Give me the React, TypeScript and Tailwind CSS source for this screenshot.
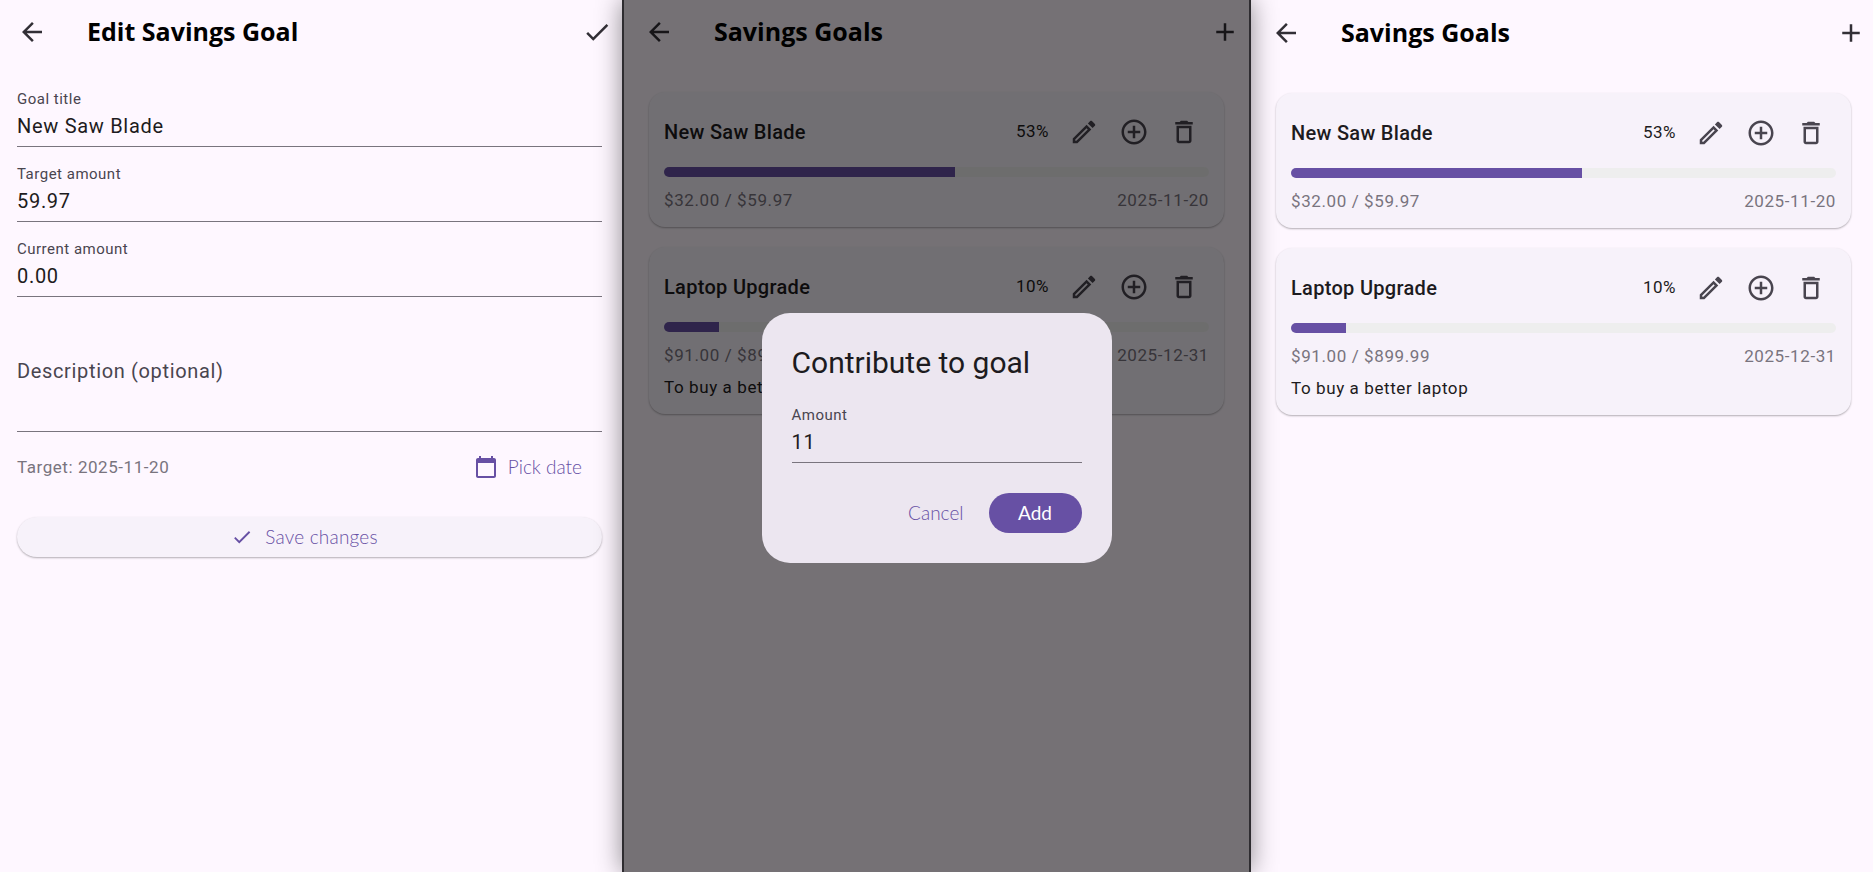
import { ReactNode } from 'react';
import {
  MdAdd,
  MdAddCircleOutline,
  MdArrowBack,
  MdCalendarToday,
  MdCheck,
  MdOutlineDelete,
  MdOutlineEdit,
} from 'react-icons/md';

const ROBOTO = "font-['Roboto',sans-serif] font-[380]";
const BUTTON_FONT = "font-['Lato',sans-serif]";

type Goal = {
  title: string;
  saved: number;
  target: number;
  date: string;
  note?: string;
};

const GOALS: Goal[] = [
  { title: 'New Saw Blade', saved: 32, target: 59.97, date: '2025-11-20' },
  { title: 'Laptop Upgrade', saved: 91, target: 899.99, date: '2025-12-31', note: 'To buy a better laptop' },
];

function AppBar({ title, action, className }: { title: string; action: ReactNode; className: string }) {
  return (
    <div className={`h-16 flex items-center justify-between text-[#322f36] ${className}`}>
      <div className="flex items-center gap-10">
        <MdArrowBack size={30} />
        <h1 className="font-['Open_Sans',sans-serif] font-bold text-[25px] text-black">{title}</h1>
      </div>
      {action}
    </div>
  );
}

function Field({ label, value, className = '' }: { label: string; value: string; className?: string }) {
  return (
    <div className={`border-b border-[#79747e] ${ROBOTO} ${className}`}>
      <div className="text-[15px] tracking-[0.5px] leading-4 text-[#49454f]">{label}</div>
      <div className="text-[20px] tracking-[0.7px] leading-7 mt-[5px] pb-[6px] text-[#1d1b20]">{value}</div>
    </div>
  );
}

function GoalCard({ goal }: { goal: Goal }) {
  const ratio = goal.saved / goal.target;
  return (
    <div className={`bg-[#f7f2fa] rounded-2xl shadow-[0_1px_2px_rgba(0,0,0,0.3)] px-[15px] pb-[15px] ${ROBOTO}`}>
      <div className="h-[64px] pt-[16px] flex items-center">
        <div className="flex-1 text-[20px] tracking-[0.3px] font-[480] text-[#1d1b20]">{goal.title}</div>
        <div className="text-[17px] tracking-[0.4px] text-[#1d1b20] w-[33px] mr-5">{Math.round(ratio * 100)}%</div>
        <div className="flex items-center gap-5 mr-[10px] text-[#49454f]">
          <MdOutlineEdit size={30} />
          <MdAddCircleOutline size={30} />
          <MdOutlineDelete size={30} />
        </div>
      </div>
      <div className="h-[10px] mt-[11px] rounded-full bg-[#eeeeee] overflow-hidden">
        <div className="h-full bg-[#6750a4]" style={{ width: `${ratio * 100}%` }} />
      </div>
      <div className="flex justify-between mt-[11px] text-[17px] tracking-[0.6px] leading-6 text-[#79747e]">
        <span>${goal.saved.toFixed(2)} / ${goal.target.toFixed(2)}</span>
        <span>{goal.date}</span>
      </div>
      {goal.note && <div className="mt-2 text-[17px] tracking-[0.6px] leading-6 text-[#1d1b20]">{goal.note}</div>}
    </div>
  );
}

function GoalList() {
  return (
    <div className="flex flex-col gap-5 mt-[28px]">
      {GOALS.map((goal) => (
        <GoalCard key={goal.title} goal={goal} />
      ))}
    </div>
  );
}

function EditPanel() {
  return (
    <div className="w-[622px] h-full shrink-0 bg-[#fef7ff]">
      <AppBar title="Edit Savings Goal" className="pl-[17px] pr-[10px]" action={<MdCheck size={30} />} />
      <div className="pl-[17px] pr-5 pt-[27px]">
        <div className="flex flex-col gap-[19px]">
          <Field label="Goal title" value="New Saw Blade" />
          <Field label="Target amount" value="59.97" />
          <Field label="Current amount" value="0.00" />
        </div>
        <div className={`mt-[60px] h-[75px] border-b border-[#79747e] text-[20px] tracking-[0.65px] text-[#49454f] leading-7 ${ROBOTO}`}>
          Description (optional)
        </div>
        <div className="flex items-center justify-between mt-[23px] h-6">
          <span className={`pt-px text-[17px] text-[#79747e] tracking-[0.55px] ${ROBOTO}`}>Target: 2025-11-20</span>
          <div className={`flex items-center gap-[10px] mr-5 text-[#6750a4] text-[19px] font-light ${BUTTON_FONT}`}>
            <MdCalendarToday size={24} />
            <span>Pick date</span>
          </div>
        </div>
        <div className={`mt-[38px] h-10 pr-[10px] rounded-full bg-[#f7f2fa] shadow-[0_1px_2px_rgba(0,0,0,0.3)] flex items-center justify-center gap-3 text-[#6750a4] text-[19px] tracking-[0.2px] font-light ${BUTTON_FONT}`}>
          <MdCheck size={22} />
          <span>Save changes</span>
        </div>
      </div>
    </div>
  );
}

function ContributeDialog() {
  return (
    <div className="w-[350px] h-[250px] rounded-[28px] bg-[#ece6f0] px-[30px] pt-[32px]">
      <h2 className={`text-[30px] leading-9 text-[#1d1b20] ${ROBOTO}`}>Contribute to goal</h2>
      <Field label="Amount" value="11" className="mt-[26px]" />
      <div className={`flex items-center justify-end gap-[25px] mt-[30px] text-[19px] ${BUTTON_FONT}`}>
        <span className="text-[#6750a4] font-light">Cancel</span>
        <span className="w-[93px] h-10 rounded-full bg-[#6750a4] text-white flex items-center justify-center">Add</span>
      </div>
    </div>
  );
}

export default function App() {
  return (
    <div className="flex w-[1873px] h-[872px] overflow-hidden bg-[#fef7ff]">
      <EditPanel />

      {/* List behind the contribute dialog */}
      <div className="relative z-10 w-[629px] h-full shrink-0 bg-[#fef7ff] border-x-2 border-[#2e2c30] shadow-[0_0_24px_rgba(0,0,0,0.45)]">
        <AppBar title="Savings Goals" className="pl-5 pr-[9px]" action={<MdAdd size={30} />} />
        <div className="pl-[25px] pr-[25px]">
          <GoalList />
        </div>
        <div className="absolute inset-0 bg-black/[0.54] flex justify-center pt-[313px]">
          <ContributeDialog />
        </div>
      </div>

      <div className="flex-1 h-full bg-[#fef7ff] pt-px">
        <AppBar title="Savings Goals" className="pl-5 pr-[7px]" action={<MdAdd size={30} />} />
        <div className="pl-[25px] pr-[22px]">
          <GoalList />
        </div>
      </div>
    </div>
  );
}
